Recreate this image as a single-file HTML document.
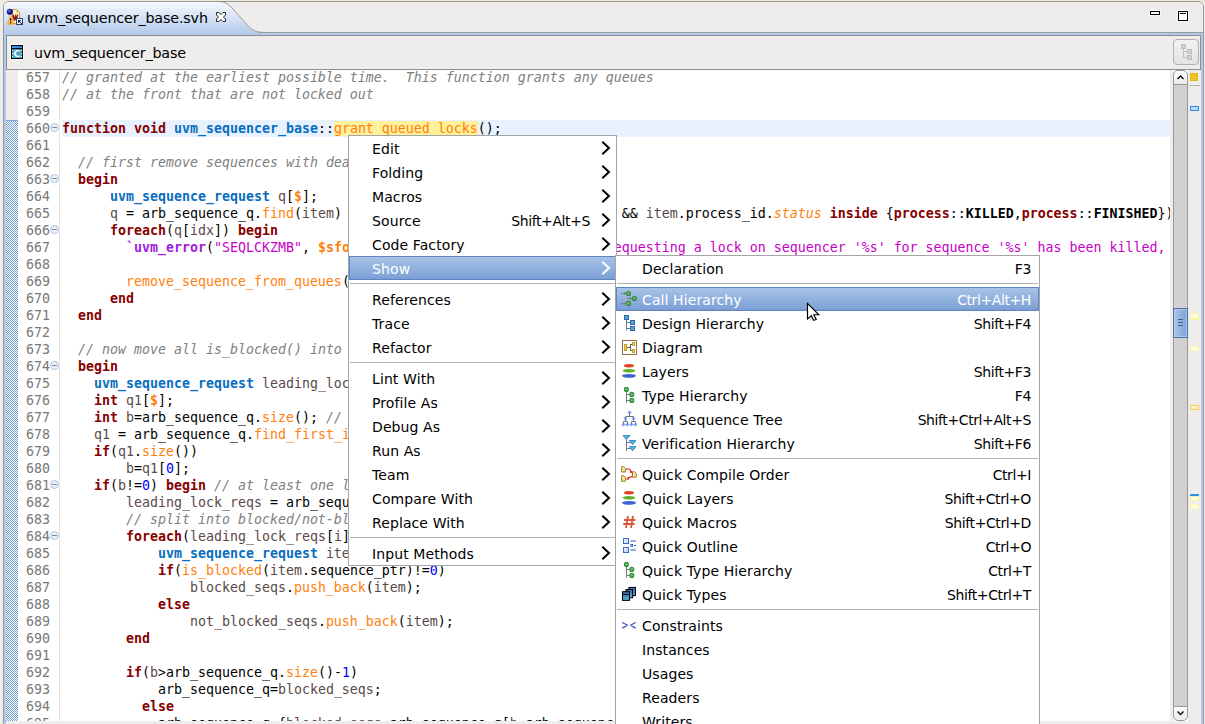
<!DOCTYPE html>
<html><head><meta charset="utf-8"><title>uvm_sequencer_base.svh</title>
<style>
*{box-sizing:border-box}
html,body{margin:0;padding:0}
body{width:1205px;height:724px;overflow:hidden;position:relative;background:#edecea;font-family:"DejaVu Sans","Liberation Sans",sans-serif;font-size:14px;color:#000}
.abs{position:absolute}
#topstrip{left:0;top:0;width:1205px;height:1px;background:#eeead9}
#folder{left:3px;top:1px;width:1201px;height:730px;border:1px solid #9c9894;border-radius:6px 6px 0 0;background:#edecea;overflow:hidden}
#tabbar{left:0;top:0;width:1199px;height:31px;background:#edecea;border-bottom:1px solid #9b9b9b}
#blue{left:0;top:31px;width:1199px;height:700px;background:#b1c9ea}
#tab{left:0;top:0;width:270px;height:33px}
#tabtext{left:23px;top:8px;font-size:14.3px;white-space:nowrap;letter-spacing:-0.15px}
#crumb{left:2px;top:33px;width:1195px;height:35px;background:#efedeb;border:1px solid #8e8e8e}
#crumbtext{left:27px;top:9px;font-size:14.3px;white-space:nowrap;letter-spacing:-0.15px}
#editor{left:2px;top:68px;width:1195px;height:651px;background:#fff;overflow:hidden}
#ruler{left:0;top:0;width:12px;height:660px;background:#efedeb}
#dither{left:0;top:50px;width:12px;height:620px;background-image:
 conic-gradient(#7aa3e0 25%, #fbfaf6 0 50%, #7aa3e0 0 75%, #fbfaf6 0);background-size:2px 2px;border-top:1px solid #7aa3e0}
#nums{left:12px;top:0;width:42px;height:660px;background:#fff}
#gline{left:53px;top:0;width:1px;height:660px;background:#e4e4e4}
.no{position:absolute;left:8px;width:26px;height:17px;line-height:17px;font-family:"DejaVu Sans Mono","Liberation Mono",monospace;font-size:13.29px;color:#787878;white-space:pre}
.fold{position:absolute;left:32px;width:9px;height:9px;border:1px solid #b4c4d8;border-radius:50%;background:#eaf1f8}
.fold:after{content:"";position:absolute;left:1px;top:3px;width:5px;height:1px;background:#7c8ca4}
#code{left:56px;top:0;width:1108px;height:660px;overflow:hidden;font-family:"DejaVu Sans Mono","Liberation Mono",monospace;font-size:13.29px}
.ln{position:absolute;left:0;height:17px;line-height:17px;white-space:pre;width:1109px;padding-left:0}
.ln.cur{background:#e8f2fe}
.k{color:#860000;font-weight:bold}
.t{color:#0a6ec0;font-weight:bold}
.f{color:#ff7f0e}
.h{color:#ff7f0e;background:#fff09a}
.c{color:#808080;font-style:italic}
.v{color:#5a4a4a}
.s{color:#c800c8}
.n{color:#0000ff}
.m{color:#a020e0;font-weight:bold}
.S{color:#ff7f0e;font-weight:bold}
.i{color:#ff7f0e;font-style:italic}
.B{font-weight:bold}
#sbgap{left:1164px;top:0;width:4px;height:660px;background:#efedeb}
#sb{left:1167px;top:0;width:15px;height:651px}
#trk{left:0;top:7px;width:15px;height:637px;background:#d3d1cf;border-left:1px solid #9c9a98;border-right:1px solid #9c9a98}
#ov{left:1182px;top:0;width:15px;height:660px;background:#efedeb}
.menu{position:absolute;background:#fff;border:1px solid #a5a5a5;font-size:14px}
.mi{position:absolute;left:0;right:0;height:24px;line-height:24px;white-space:nowrap}
.mi .lbl{position:absolute;left:23px;top:1px;letter-spacing:.1px}
.mi .acc{position:absolute;right:26px;top:1px;letter-spacing:-0.4px}
.mi .arr{position:absolute;right:5px;top:5px;width:10px;height:14px;line-height:0}
.mi .ico{position:absolute;left:5px;top:4px;width:16px;height:16px;line-height:0}
.mi.sel{color:#fff;background:linear-gradient(#a9c4e8,#7ea2d6 90%,#7196cc);box-shadow:inset 0 0 0 1px #5f86c0}
.sep{position:absolute;left:1px;right:1px;height:1px;background:#b4b4b4}
#m2 .lbl{left:26px}
#m2 .acc{right:8px}
#bottom{left:6px;top:721px;width:1195px;height:3px;background:#efedeb}
</style></head><body>
<div id="topstrip" class="abs"></div>
<div id="folder" class="abs">
 <div id="tabbar" class="abs"></div>
 <div id="blue" class="abs"></div>
 <svg id="tab" class="abs" width="270" height="33" viewBox="0 0 270 33">
  <defs><linearGradient id="tg" x1="0" y1="0" x2="0" y2="1"><stop offset="0" stop-color="#f6f9fd"/><stop offset="1" stop-color="#b1c9e9"/></linearGradient></defs>
  <path d="M0 33V0H214C223 0 226 4 232 11L241.500 21.500C247 28 251 31 261 31H270V33Z" fill="url(#tg)"/>
  <path d="M214 -0.500C223 -0.500 226 3.500 232 10.500L241.500 21C247 27.500 251 30.500 261 30.500H270" fill="none" stroke="#9b9b9b"/>
 </svg>
 <div id="tabicon" class="abs" style="left:0px;top:4px;width:20px;height:22px;line-height:0"><svg width="20" height="22" viewBox="0 0 20 22"><defs><radialGradient id="bg1" cx=".4" cy=".35" r=".6"><stop offset="0" stop-color="#6a8ac0"/><stop offset=".6" stop-color="#10109a"/><stop offset="1" stop-color="#00008a"/></radialGradient><linearGradient id="wg" x1="0" y1="0" x2="0" y2="1"><stop offset="0" stop-color="#fdecb0"/><stop offset="1" stop-color="#f2a434"/></linearGradient></defs><path d="M8.500 3.500H12.500L15.500 6.500V17.500H8.500Z" fill="#fdf3d4" stroke="#c8982c"/><path d="M12.500 4V6.500H15Z" fill="#dcb050"/><path d="M6.500 8.500L3.200 18.500H10.300Z" fill="url(#wg)" stroke="#f0ac3c" stroke-width=".8" stroke-linejoin="round" opacity=".92"/><rect x="6" y="12" width="1.200" height="3.200" fill="#3a1a00"/><rect x="6" y="16" width="1.200" height="1.300" fill="#3a1a00"/><path d="M9 8.600L10.500 14.600L11.500 10.400L12.400 13.400L13.500 8.600" stroke="#900c0c" stroke-width="1.400" fill="none"/><circle cx="5.800" cy="5.800" r="3" fill="url(#bg1)"/><rect x="12.500" y="12.500" width="6" height="6" fill="#fff" stroke="#2c4c7c"/><path d="M14 14H17V14.800H15.500L18.800 18.200L18.200 18.800L14.800 15.400V17H14Z" fill="#0c1c4c"/></svg></div>
 <div id="tabtext" class="abs">uvm_sequencer_base.svh</div>
 <div id="tabclose" class="abs" style="left:211px;top:8.500px;line-height:0"><svg width="12" height="12" viewBox="0 0 12 12"><path d="M1.500 1.500H4L6 3.500L8 1.500H10.500V4L8.500 6L10.500 8V10.500H8L6 8.500L4 10.500H1.500V8L3.500 6L1.500 4Z" fill="#fff" stroke="#222" stroke-width="1"/></svg></div>
 <div id="minb" class="abs" style="left:1146px;top:9px;width:10px;height:4px;border:1px solid #000;background:#fff;box-shadow:0 0 0 1px rgba(255,255,255,.8)"></div>
 <div id="maxb" class="abs" style="left:1174px;top:9px;width:10px;height:10px;border:1px solid #000;background:#fff;box-shadow:0 0 0 1px rgba(255,255,255,.8)"><div class="abs" style="left:1px;top:1px;width:6px;height:1px;background:#000"></div></div>
 <div id="crumb" class="abs">
   <div class="abs" style="left:2px;top:7px;width:16px;height:18px;line-height:0"><svg width="16" height="18" viewBox="0 0 16 18"><defs><linearGradient id="cg" x1="0" y1="0" x2="0" y2="1"><stop offset="0" stop-color="#3c84c4"/><stop offset="1" stop-color="#44b4c4"/></linearGradient><linearGradient id="cg2" x1="0" y1="0" x2="1" y2="0"><stop offset="0" stop-color="#4aa4e4"/><stop offset="1" stop-color="#4a78e0"/></linearGradient></defs><rect x="1" y="1" width="14" height="16" rx="1" fill="#fff" opacity=".9"/><rect x="2.500" y="2.500" width="11" height="13" fill="url(#cg)" stroke="#000"/><rect x="3" y="3" width="10" height="2" fill="url(#cg2)"/><rect x="3" y="5" width="10" height="1" fill="#000"/><g fill="#fff"><rect x="3" y="7" width="1" height="1"/><rect x="3" y="10" width="1" height="1"/><rect x="3" y="13" width="1" height="1"/><rect x="12" y="7" width="1" height="1"/><rect x="12" y="10" width="1" height="1"/><rect x="12" y="13" width="1" height="1"/></g><text x="8.100" y="14" font-family="DejaVu Sans, Liberation Sans, sans-serif" font-size="9.500" font-weight="bold" fill="#fff" text-anchor="middle">C</text></svg></div>
   <div id="crumbtext" class="abs">uvm_sequencer_base</div>
   <div class="abs" style="left:1166px;top:3px;width:26px;height:26px;border:1px solid #b3b1af;border-radius:4px;background:linear-gradient(#f3f2f1,#e4e3e1)"><svg width="24" height="24" viewBox="0 0 24 24"><path d="M9.500 8V17.500H13M9.500 11.500H13" stroke="#c0c0c0" fill="none"/><rect x="7.500" y="4.500" width="4" height="4" fill="#d0d0d0" stroke="#bdbdbd"/><rect x="13.500" y="9.500" width="4" height="4" fill="#d0d0d0" stroke="#bdbdbd"/><rect x="13.500" y="15.500" width="4" height="4" fill="#d0d0d0" stroke="#bdbdbd"/></svg></div>
 </div>
 <div id="editor" class="abs">
   <div id="ruler" class="abs"></div>
   <div id="dither" class="abs"></div>
   <div id="nums" class="abs">
<div class="no" style="top:-1px">657</div>
<div class="no" style="top:16px">658</div>
<div class="no" style="top:33px">659</div>
<div class="no" style="top:50px">660</div>
<div class="fold" style="top:53px"></div>
<div class="no" style="top:67px">661</div>
<div class="no" style="top:84px">662</div>
<div class="no" style="top:101px">663</div>
<div class="fold" style="top:104px"></div>
<div class="no" style="top:118px">664</div>
<div class="no" style="top:135px">665</div>
<div class="no" style="top:152px">666</div>
<div class="fold" style="top:155px"></div>
<div class="no" style="top:169px">667</div>
<div class="no" style="top:186px">668</div>
<div class="no" style="top:203px">669</div>
<div class="no" style="top:220px">670</div>
<div class="no" style="top:237px">671</div>
<div class="no" style="top:254px">672</div>
<div class="no" style="top:271px">673</div>
<div class="no" style="top:288px">674</div>
<div class="fold" style="top:291px"></div>
<div class="no" style="top:305px">675</div>
<div class="no" style="top:322px">676</div>
<div class="no" style="top:339px">677</div>
<div class="no" style="top:356px">678</div>
<div class="no" style="top:373px">679</div>
<div class="no" style="top:390px">680</div>
<div class="no" style="top:407px">681</div>
<div class="fold" style="top:410px"></div>
<div class="no" style="top:424px">682</div>
<div class="no" style="top:441px">683</div>
<div class="no" style="top:458px">684</div>
<div class="fold" style="top:461px"></div>
<div class="no" style="top:475px">685</div>
<div class="no" style="top:492px">686</div>
<div class="no" style="top:509px">687</div>
<div class="no" style="top:526px">688</div>
<div class="no" style="top:543px">689</div>
<div class="no" style="top:560px">690</div>
<div class="no" style="top:577px">691</div>
<div class="no" style="top:594px">692</div>
<div class="no" style="top:611px">693</div>
<div class="no" style="top:628px">694</div>
<div class="no" style="top:645px">695</div>
   </div>
   <div id="gline" class="abs"></div>
   <div id="code" class="abs">
<div class="ln" style="top:-1px"><span class="c">// granted at the earliest possible time.  This function grants any queues</span></div>
<div class="ln" style="top:16px"><span class="c">// at the front that are not locked out</span></div>
<div class="ln" style="top:33px"></div>
<div class="ln cur" style="top:50px"><span class="k">function</span> <span class="k">void</span> <span class="t">uvm_sequencer_base</span>::<span class="h">grant_queued_locks</span>();</div>
<div class="ln" style="top:67px"></div>
<div class="ln" style="top:84px">  <span class="c">// first remove sequences with dead lock control process</span></div>
<div class="ln" style="top:101px">  <span class="k">begin</span></div>
<div class="ln" style="top:118px">      <span class="t">uvm_sequence_request</span> <span class="v">q</span>[<span class="S">$</span>];</div>
<div class="ln" style="top:135px">      <span class="v">q</span> = arb_sequence_q.<span class="f">find</span>(<span class="v">item</span>) <span class="k">with</span> (<span class="v">item</span>.request==SEQ_TYPE_LOCK &amp;&amp; <span class="v">item</span>.process_id.<span class="i">status</span> <span class="k">inside</span> {<span class="k">process</span>::<span class="B">KILLED</span>,<span class="k">process</span>::<span class="B">FINISHED</span>});</div>
<div class="ln" style="top:152px">      <span class="k">foreach</span>(<span class="v">q</span>[<span class="v">idx</span>]) <span class="k">begin</span></div>
<div class="ln" style="top:169px">        <span class="m">`uvm_error</span>(<span class="s">"SEQLCKZMB"</span>, <span class="S">$sformatf</span>(<span class="s">"The task responsible for requesting a lock on sequencer '%s' for sequence '%s' has been killed, to avoid a deadlock the sequence will be removed</span></div>
<div class="ln" style="top:186px"></div>
<div class="ln" style="top:203px">        <span class="f">remove_sequence_from_queues</span>(<span class="v">q</span>[<span class="v">idx</span>].sequence_ptr);</div>
<div class="ln" style="top:220px">      <span class="k">end</span></div>
<div class="ln" style="top:237px">  <span class="k">end</span></div>
<div class="ln" style="top:254px"></div>
<div class="ln" style="top:271px">  <span class="c">// now move all is_blocked() into lock_list</span></div>
<div class="ln" style="top:288px">  <span class="k">begin</span></div>
<div class="ln" style="top:305px">    <span class="t">uvm_sequence_request</span> <span class="v">leading_lock_reqs</span>[<span class="S">$</span>],<span class="v">blocked_seqs</span>[<span class="S">$</span>];</div>
<div class="ln" style="top:322px">    <span class="k">int</span> <span class="v">q1</span>[<span class="S">$</span>];</div>
<div class="ln" style="top:339px">    <span class="k">int</span> <span class="v">b</span>=arb_sequence_q.<span class="f">size</span>(); <span class="c">// index for first non-LOCK request</span></div>
<div class="ln" style="top:356px">    <span class="v">q1</span> = arb_sequence_q.<span class="f">find_first_index</span>(<span class="v">item</span>) <span class="k">with</span> (<span class="v">item</span>.request!=SEQ_TYPE_LOCK);</div>
<div class="ln" style="top:373px">    <span class="k">if</span>(<span class="v">q1</span>.<span class="f">size</span>())</div>
<div class="ln" style="top:390px">        <span class="v">b</span>=<span class="v">q1</span>[<span class="n">0</span>];</div>
<div class="ln" style="top:407px">    <span class="k">if</span>(<span class="v">b</span>!=<span class="n">0</span>) <span class="k">begin</span> <span class="c">// at least one lock</span></div>
<div class="ln" style="top:424px">        <span class="v">leading_lock_reqs</span> = arb_sequence_q[<span class="n">0</span>:<span class="v">b</span>-<span class="n">1</span>];</div>
<div class="ln" style="top:441px">        <span class="c">// split into blocked/not-blocked requests</span></div>
<div class="ln" style="top:458px">        <span class="k">foreach</span>(<span class="v">leading_lock_reqs</span>[<span class="v">i</span>]) <span class="k">begin</span></div>
<div class="ln" style="top:475px">            <span class="t">uvm_sequence_request</span> <span class="v">item</span> = <span class="v">leading_lock_reqs</span>[<span class="v">i</span>];</div>
<div class="ln" style="top:492px">            <span class="k">if</span>(<span class="f">is_blocked</span>(<span class="v">item</span>.sequence_ptr)!=<span class="n">0</span>)</div>
<div class="ln" style="top:509px">                <span class="v">blocked_seqs</span>.<span class="f">push_back</span>(<span class="v">item</span>);</div>
<div class="ln" style="top:526px">            <span class="k">else</span></div>
<div class="ln" style="top:543px">                <span class="v">not_blocked_seqs</span>.<span class="f">push_back</span>(<span class="v">item</span>);</div>
<div class="ln" style="top:560px">        <span class="k">end</span></div>
<div class="ln" style="top:577px"></div>
<div class="ln" style="top:594px">        <span class="k">if</span>(<span class="v">b</span>&gt;arb_sequence_q.<span class="f">size</span>()-<span class="n">1</span>)</div>
<div class="ln" style="top:611px">            arb_sequence_q=<span class="v">blocked_seqs</span>;</div>
<div class="ln" style="top:628px">          <span class="k">else</span></div>
<div class="ln" style="top:645px">            arb_sequence_q={<span class="v">blocked_seqs</span>,arb_sequence_q[<span class="v">b</span>:arb_sequence_q.<span class="f">size</span>()-<span class="n">1</span>]};</div>
   </div>
   <div id="sbgap" class="abs"></div>
   <div id="sb" class="abs">
     <div id="trk" class="abs"></div>
     <div class="abs" style="left:0;top:0;width:15px;height:15px;border:1px solid #9c9a98;border-radius:5px 5px 0 0;background:linear-gradient(#fff,#eceae8)"><svg width="13" height="13" viewBox="0 0 13 13"><path d="M3.500 8L6.500 5L9.500 8" stroke="#111" stroke-width="1.500" fill="none"/></svg></div>
     <div class="abs" style="left:0;top:238px;width:15px;height:30px;border:1px solid #4a70a8;background:linear-gradient(90deg,#a9c4ea,#7ea3d6);box-shadow:inset 0 0 0 1px rgba(190,212,240,.7)"><svg width="13" height="30" viewBox="0 0 13 30"><path d="M4 10.500H9M4 13.500H9M4 16.500H9" stroke="#3a5a90" stroke-width="1"/></svg></div>
     <div class="abs" style="left:0;top:636px;width:15px;height:15px;border:1px solid #9c9a98;border-radius:0 0 5px 5px;background:linear-gradient(#fff,#eceae8)"><svg width="13" height="13" viewBox="0 0 13 13"><path d="M3.500 4.500L6.500 7.500L9.500 4.500" stroke="#111" stroke-width="1.500" fill="none"/></svg></div>
   </div>
   <div id="ov" class="abs">
     <div class="abs" style="left:2px;top:3px;width:8px;height:8px;background:#f0c32c;border:1px solid #e4b61c"></div>
     <div class="abs" style="left:1px;top:15px;width:11px;height:1px;background:#b5b3b1"></div>
     <div class="abs" style="left:2px;top:36px;width:9px;height:5px;background:#bcd6f2;border:1px solid #2f8ff0"></div>
     <div class="abs" style="left:2px;top:243px;width:9px;height:7px;background:#fffce4;border:1px solid #fdf5a4;box-shadow:inset 0 -1px 0 #fdf5a4"></div>
     <div class="abs" style="left:2px;top:276px;width:9px;height:5px;background:#fffce4;border:1px solid #fdf5a4"></div>
     <div class="abs" style="left:2px;top:335px;width:9px;height:5px;background:#fdf2d0;border:1px solid #f5d050"></div>
     <div class="abs" style="left:2px;top:424px;width:9px;height:3px;background:#2f8ff0;border-radius:1px 1px 0 0"></div><div class="abs" style="left:2px;top:426px;width:9px;height:5px;background:#fffde8;border:1px solid #fdf8a0;border-top-color:#e8f0c0"></div>
     <div class="abs" style="left:2px;top:434px;width:9px;height:5px;background:#fffde8;border:1px solid #fdf8a0"></div>
   </div>
 </div>
</div>
<div id="bottom" class="abs"></div>
<div id="m1" class="menu" style="left:348px;top:135px;width:269px;height:431px">
<div class="mi" style="top:0px"><span class="lbl">Edit</span><span class="arr"><svg width="10" height="14" viewBox="0 0 10 14"><path d="M1.300 0.800 L8 7 L1.300 13.200" fill="none" stroke="currentColor" stroke-width="2" stroke-linejoin="miter"/></svg></span></div>
<div class="mi" style="top:24px"><span class="lbl">Folding</span><span class="arr"><svg width="10" height="14" viewBox="0 0 10 14"><path d="M1.300 0.800 L8 7 L1.300 13.200" fill="none" stroke="currentColor" stroke-width="2" stroke-linejoin="miter"/></svg></span></div>
<div class="mi" style="top:48px"><span class="lbl">Macros</span><span class="arr"><svg width="10" height="14" viewBox="0 0 10 14"><path d="M1.300 0.800 L8 7 L1.300 13.200" fill="none" stroke="currentColor" stroke-width="2" stroke-linejoin="miter"/></svg></span></div>
<div class="mi" style="top:72px"><span class="lbl">Source</span><span class="acc">Shift+Alt+S</span><span class="arr"><svg width="10" height="14" viewBox="0 0 10 14"><path d="M1.300 0.800 L8 7 L1.300 13.200" fill="none" stroke="currentColor" stroke-width="2" stroke-linejoin="miter"/></svg></span></div>
<div class="mi" style="top:96px"><span class="lbl">Code Factory</span><span class="arr"><svg width="10" height="14" viewBox="0 0 10 14"><path d="M1.300 0.800 L8 7 L1.300 13.200" fill="none" stroke="currentColor" stroke-width="2" stroke-linejoin="miter"/></svg></span></div>
<div class="mi sel" style="top:120px"><span class="lbl">Show</span><span class="arr"><svg width="10" height="14" viewBox="0 0 10 14"><path d="M1.300 0.800 L8 7 L1.300 13.200" fill="none" stroke="currentColor" stroke-width="2" stroke-linejoin="miter"/></svg></span></div>
<div class="sep" style="top:147px"></div>
<div class="mi" style="top:151px"><span class="lbl">References</span><span class="arr"><svg width="10" height="14" viewBox="0 0 10 14"><path d="M1.300 0.800 L8 7 L1.300 13.200" fill="none" stroke="currentColor" stroke-width="2" stroke-linejoin="miter"/></svg></span></div>
<div class="mi" style="top:175px"><span class="lbl">Trace</span><span class="arr"><svg width="10" height="14" viewBox="0 0 10 14"><path d="M1.300 0.800 L8 7 L1.300 13.200" fill="none" stroke="currentColor" stroke-width="2" stroke-linejoin="miter"/></svg></span></div>
<div class="mi" style="top:199px"><span class="lbl">Refactor</span><span class="arr"><svg width="10" height="14" viewBox="0 0 10 14"><path d="M1.300 0.800 L8 7 L1.300 13.200" fill="none" stroke="currentColor" stroke-width="2" stroke-linejoin="miter"/></svg></span></div>
<div class="sep" style="top:226px"></div>
<div class="mi" style="top:230px"><span class="lbl">Lint With</span><span class="arr"><svg width="10" height="14" viewBox="0 0 10 14"><path d="M1.300 0.800 L8 7 L1.300 13.200" fill="none" stroke="currentColor" stroke-width="2" stroke-linejoin="miter"/></svg></span></div>
<div class="mi" style="top:254px"><span class="lbl">Profile As</span><span class="arr"><svg width="10" height="14" viewBox="0 0 10 14"><path d="M1.300 0.800 L8 7 L1.300 13.200" fill="none" stroke="currentColor" stroke-width="2" stroke-linejoin="miter"/></svg></span></div>
<div class="mi" style="top:278px"><span class="lbl">Debug As</span><span class="arr"><svg width="10" height="14" viewBox="0 0 10 14"><path d="M1.300 0.800 L8 7 L1.300 13.200" fill="none" stroke="currentColor" stroke-width="2" stroke-linejoin="miter"/></svg></span></div>
<div class="mi" style="top:302px"><span class="lbl">Run As</span><span class="arr"><svg width="10" height="14" viewBox="0 0 10 14"><path d="M1.300 0.800 L8 7 L1.300 13.200" fill="none" stroke="currentColor" stroke-width="2" stroke-linejoin="miter"/></svg></span></div>
<div class="mi" style="top:326px"><span class="lbl">Team</span><span class="arr"><svg width="10" height="14" viewBox="0 0 10 14"><path d="M1.300 0.800 L8 7 L1.300 13.200" fill="none" stroke="currentColor" stroke-width="2" stroke-linejoin="miter"/></svg></span></div>
<div class="mi" style="top:350px"><span class="lbl">Compare With</span><span class="arr"><svg width="10" height="14" viewBox="0 0 10 14"><path d="M1.300 0.800 L8 7 L1.300 13.200" fill="none" stroke="currentColor" stroke-width="2" stroke-linejoin="miter"/></svg></span></div>
<div class="mi" style="top:374px"><span class="lbl">Replace With</span><span class="arr"><svg width="10" height="14" viewBox="0 0 10 14"><path d="M1.300 0.800 L8 7 L1.300 13.200" fill="none" stroke="currentColor" stroke-width="2" stroke-linejoin="miter"/></svg></span></div>
<div class="sep" style="top:401px"></div>
<div class="mi" style="top:405px"><span class="lbl">Input Methods</span><span class="arr"><svg width="10" height="14" viewBox="0 0 10 14"><path d="M1.300 0.800 L8 7 L1.300 13.200" fill="none" stroke="currentColor" stroke-width="2" stroke-linejoin="miter"/></svg></span></div>
</div>
<div id="m2" class="menu" style="left:615px;top:255px;width:425px;height:480px">
<div class="mi" style="top:0px"><span class="lbl">Declaration</span><span class="acc">F3</span></div>
<div class="sep" style="top:27px"></div>
<div class="mi sel" style="top:31px"><span class="ico"><svg width="16" height="16" viewBox="0 0 16 16"><g stroke="#808080" stroke-width="1" fill="none"><path d="M0 2.500H5M3 1L4.500 2.500L3 4M6 7.500H11M9 6L10.500 7.500L9 9M0 12.500H5M3 11L4.500 12.500L3 14"/></g><g fill="#6cbc6c" stroke="#2e8a2e" stroke-width="1.100"><circle cx="7.500" cy="2.600" r="2"/><circle cx="13.400" cy="7.500" r="2"/><circle cx="7.500" cy="12.400" r="2"/></g></svg></span><span class="lbl">Call Hierarchy</span><span class="acc">Ctrl+Alt+H</span></div>
<div class="mi" style="top:55px"><span class="ico"><svg width="16" height="16" viewBox="0 0 16 16"><path d="M5.500 5V15.500M5.500 7.500H9.500M5.500 13.500H9.500" stroke="#707888" fill="none"/><g fill="#52b4b0" stroke="#3a5ac8"><rect x="3.500" y="0.500" width="4" height="4"/><rect x="9.500" y="5.500" width="4" height="4"/><rect x="9.500" y="11.500" width="4" height="4"/></g></svg></span><span class="lbl">Design Hierarchy</span><span class="acc">Shift+F4</span></div>
<div class="mi" style="top:79px"><span class="ico"><svg width="16" height="16" viewBox="0 0 16 16"><rect x="1.500" y="1.500" width="14" height="14" fill="#fff" stroke="#9a6a3c"/><path d="M6 8.500H9M9.500 5V12M9.500 5.500H11M9.500 11.500H11" stroke="#606060" fill="none"/><g fill="#f6cc44" stroke="#d0a020"><rect x="3.500" y="5.500" width="2" height="6"/><rect x="11.500" y="3.500" width="2" height="3"/><rect x="11.500" y="10.500" width="2" height="3"/></g></svg></span><span class="lbl">Diagram</span></div>
<div class="mi" style="top:103px"><span class="ico"><svg width="16" height="16" viewBox="0 0 16 16"><ellipse cx="8" cy="2.700" rx="5" ry="1.700" fill="#e2401c"/><ellipse cx="8" cy="7.800" rx="6.200" ry="1.800" fill="#5cb42c"/><ellipse cx="8" cy="12.800" rx="7" ry="1.900" fill="#3a64d0"/></svg></span><span class="lbl">Layers</span><span class="acc">Shift+F3</span></div>
<div class="mi" style="top:127px"><span class="ico"><svg width="16" height="16" viewBox="0 0 16 16"><path d="M5.500 4V15.700M5.500 7.500H9M5.500 13.500H9" stroke="#707888" fill="none"/><g fill="#6cbc6c" stroke="#2e8a2e" stroke-width="1.100"><circle cx="5.400" cy="2.400" r="2"/><circle cx="10.800" cy="7.400" r="2"/><circle cx="10.800" cy="13.400" r="2"/></g></svg></span><span class="lbl">Type Hierarchy</span><span class="acc">F4</span></div>
<div class="mi" style="top:151px"><span class="ico"><svg width="16" height="16" viewBox="0 0 16 16"><g stroke="#707888" fill="none" stroke-width="1"><path d="M8.500 2V5M4.500 7V5.500H12.500V7M4.500 8V10.500M2.500 12.500V10.500H6.500V12.500M12.500 8V10.500M10.500 12.500V10.500H14.500V12.500"/></g><g fill="#7aa8f2" stroke="#3a6ae0" stroke-width=".7"><path d="M8.5 0.05L9.95 1.5L8.5 2.95L7.05 1.5Z"/><path d="M4.5 6.05L5.95 7.5L4.5 8.95L3.05 7.5Z"/><path d="M12.5 6.05L13.95 7.5L12.5 8.95L11.05 7.5Z"/><path d="M2.5 12.05L3.95 13.5L2.5 14.95L1.05 13.5Z"/><path d="M6.5 12.05L7.95 13.5L6.5 14.95L5.05 13.5Z"/><path d="M10.5 12.05L11.95 13.5L10.5 14.95L9.05 13.5Z"/><path d="M14.5 12.05L15.95 13.5L14.5 14.95L13.05 13.5Z"/></g></svg></span><span class="lbl">UVM Sequence Tree</span><span class="acc">Shift+Ctrl+Alt+S</span></div>
<div class="mi" style="top:175px"><span class="ico"><svg width="16" height="16" viewBox="0 0 16 16"><path d="M5.500 4V15.900M5.500 7.500H10M5.500 13.500H10" stroke="#707888" fill="none"/><g fill="#40c4c0" stroke="#3a7ad4" stroke-width=".9" stroke-linejoin="round"><path d="M2 0.500H9L5.500 4.500Z"/><path d="M8.300 5.500H14.900L11.600 9.700Z"/><path d="M8.300 11.500H14.900L11.600 15.800Z"/></g></svg></span><span class="lbl">Verification Hierarchy</span><span class="acc">Shift+F6</span></div>
<div class="sep" style="top:202px"></div>
<div class="mi" style="top:206px"><span class="ico"><svg width="16" height="16" viewBox="0 0 16 16"><g fill="#f6e6a4" stroke="#a07c24" stroke-width="1" stroke-linejoin="miter"><path d="M0.700 0.700H2.800L4.500 2.400V6H0.700Z"/><path d="M0.700 9.700H2.800L4.500 11.400V15.300H0.700Z"/><path d="M11.500 5.700H13.600L15.300 7.400V11.200H11.500Z"/></g><g stroke="#f01818" fill="none" stroke-width="1.200"><path d="M5 3H8C9 3.500 9.500 4.500 10.200 5.800M11 10.300L6.200 12.600"/></g><path d="M11.200 7.200L8.500 6.300L10.700 4.500Z" fill="#f01818"/><path d="M4.800 13.400L7.500 11L8 13.600Z" fill="#f01818"/></svg></span><span class="lbl">Quick Compile Order</span><span class="acc">Ctrl+I</span></div>
<div class="mi" style="top:230px"><span class="ico"><svg width="16" height="16" viewBox="0 0 16 16"><ellipse cx="8" cy="2.700" rx="5" ry="1.700" fill="#e2401c"/><ellipse cx="8" cy="7.800" rx="6.200" ry="1.800" fill="#5cb42c"/><ellipse cx="8" cy="12.800" rx="7" ry="1.900" fill="#3a64d0"/></svg></span><span class="lbl">Quick Layers</span><span class="acc">Shift+Ctrl+O</span></div>
<div class="mi" style="top:254px"><span class="ico"><svg width="16" height="16" viewBox="0 0 16 16"><path d="M7 2L5 14M12 2L10 14M3 6H14.400M2.200 10H13.600" stroke="#e0583a" stroke-width="1.800" fill="none"/></svg></span><span class="lbl">Quick Macros</span><span class="acc">Shift+Ctrl+D</span></div>
<div class="mi" style="top:278px"><span class="ico"><svg width="16" height="16" viewBox="0 0 16 16"><defs><linearGradient id="og" x1="0" y1="0" x2="1" y2="1"><stop offset="0" stop-color="#f4f8fe"/><stop offset="1" stop-color="#b8d0f0"/></linearGradient></defs><rect x="2.500" y="0.500" width="5" height="5" fill="url(#og)" stroke="#3a6ac8"/><rect x="2.500" y="9.500" width="5" height="5" fill="url(#og)" stroke="#3a6ac8"/><path d="M9.300 3H15M9.300 12H15M13 7.500H15" stroke="#2c5cc0" fill="none"/><rect x="9.800" y="6.500" width="1.800" height="1.800" fill="#fff" stroke="#2c5cc0" stroke-width=".9"/></svg></span><span class="lbl">Quick Outline</span><span class="acc">Ctrl+O</span></div>
<div class="mi" style="top:302px"><span class="ico"><svg width="16" height="16" viewBox="0 0 16 16"><path d="M5.500 4V15.700M5.500 7.500H9M5.500 13.500H9" stroke="#707888" fill="none"/><g fill="#6cbc6c" stroke="#2e8a2e" stroke-width="1.100"><circle cx="5.400" cy="2.400" r="2"/><circle cx="10.800" cy="7.400" r="2"/><circle cx="10.800" cy="13.400" r="2"/></g></svg></span><span class="lbl">Quick Type Hierarchy</span><span class="acc">Ctrl+T</span></div>
<div class="mi" style="top:326px"><span class="ico"><svg width="16" height="16" viewBox="0 0 16 16"><defs><linearGradient id="tyg" x1="0" y1="0" x2="0" y2="1"><stop offset="0" stop-color="#3c64b4"/><stop offset="1" stop-color="#54b4cc"/></linearGradient></defs><g fill="url(#tyg)" stroke="#000" stroke-width="1"><rect x="7.900" y="1.400" width="6.500" height="8.300"/><rect x="5" y="3.500" width="6.600" height="8.300"/><rect x="1.500" y="5.700" width="7" height="8.700"/></g><path d="M2 8.500H8" stroke="#000" stroke-width="1"/></svg></span><span class="lbl">Quick Types</span><span class="acc">Shift+Ctrl+T</span></div>
<div class="sep" style="top:353px"></div>
<div class="mi" style="top:357px"><span class="ico"><svg width="16" height="16" viewBox="0 0 16 16"><path d="M1.300 5.500L6.600 8.300L1.300 11.100M14.700 5.500L9.400 8.300L14.700 11.100" stroke="#3a50c8" stroke-width="1.300" fill="none" stroke-linejoin="bevel"/></svg></span><span class="lbl">Constraints</span></div>
<div class="mi" style="top:381px"><span class="lbl">Instances</span></div>
<div class="mi" style="top:405px"><span class="lbl">Usages</span></div>
<div class="mi" style="top:429px"><span class="lbl">Readers</span></div>
<div class="mi" style="top:453px"><span class="lbl">Writers</span></div>
</div>
<div id="cursor" class="abs" style="left:806px;top:300px;width:16px;height:24px;line-height:0"><svg width="16" height="24" viewBox="0 0 16 24"><path d="M2.500 5.500L4 21L8 18L10 22.500Z" fill="#000" opacity=".15"/><path transform="translate(0,1.300) scale(1,0.9)" d="M1.500 2.300V19.600L5.300 16L7.700 21.200L10.200 20.200L7.800 15H12.900Z" fill="#fff" stroke="#000" stroke-width="1.200" stroke-linejoin="miter"/></svg></div>
</body></html>
